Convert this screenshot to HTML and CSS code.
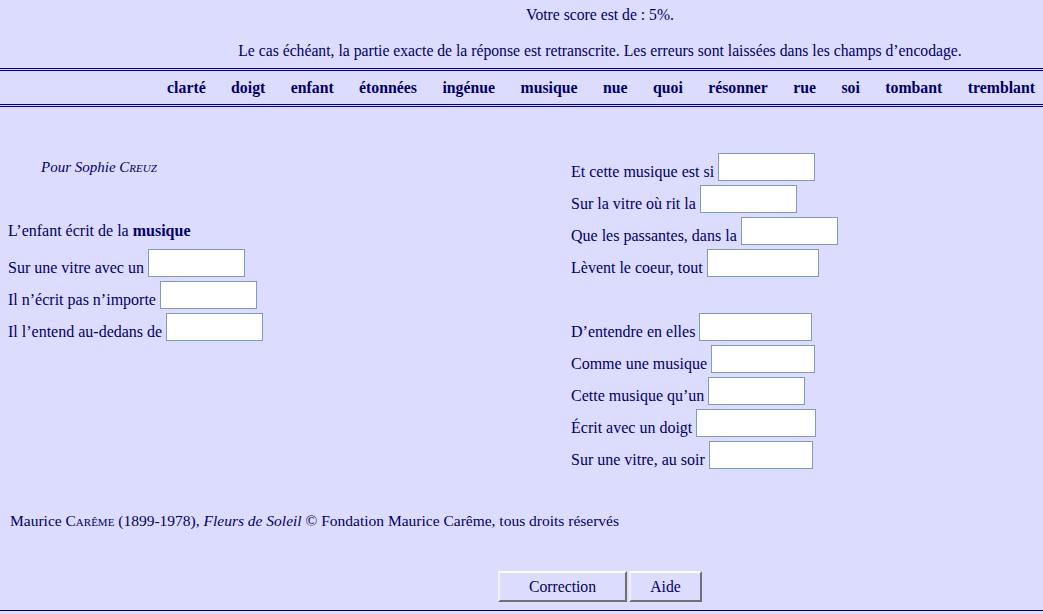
FILE: index.html
```html
<!DOCTYPE html>
<html lang="fr">
<head>
<meta charset="utf-8">
<title>Exercice</title>
<link rel="stylesheet" href="styles.css">
</head>
<body>
<div class="head">
  <p class="score">Votre score est de : 5%.</p>
  <p class="note">Le cas échéant, la partie exacte de la réponse est retranscrite. Les erreurs sont laissées dans les champs d’encodage.</p>
</div>
<div class="words">
  <span>clarté</span><span>doigt</span><span>enfant</span><span>étonnées</span><span>ingénue</span><span>musique</span><span>nue</span><span>quoi</span><span>résonner</span><span>rue</span><span>soi</span><span>tombant</span><span>tremblant</span>
</div>
<div class="poem">
  <div class="col left">
    <div class="row text dedic"><i>Pour Sophie <span class="sc">Creuz</span></i></div>
    <div class="row"></div>
    <div class="row text">L’enfant écrit de la&nbsp;<b>musique</b></div>
    <div class="row"><span>Sur une vitre avec un</span><input class="w97" type="text"></div>
    <div class="row"><span>Il n’écrit pas n’importe</span><input class="w97" type="text"></div>
    <div class="row"><span>Il l’entend au-dedans de</span><input class="w97" type="text"></div>
  </div>
  <div class="col right">
    <div class="row"><span>Et cette musique est si</span><input class="w97" type="text"></div>
    <div class="row"><span>Sur la vitre où rit la</span><input class="w97" type="text"></div>
    <div class="row"><span>Que les passantes, dans la</span><input class="w97" type="text"></div>
    <div class="row"><span>Lèvent le coeur, tout</span><input class="w112" type="text"></div>
    <div class="row"></div>
    <div class="row"><span>D’entendre en elles</span><input class="w113" type="text"></div>
    <div class="row"><span>Comme une musique</span><input class="w104" type="text"></div>
    <div class="row"><span>Cette musique qu’un</span><input class="w97" type="text"></div>
    <div class="row"><span>Écrit avec un doigt</span><input class="w120" type="text"></div>
    <div class="row"><span>Sur une vitre, au soir</span><input class="w104" type="text"></div>
  </div>
</div>
<p class="credit">Maurice <span class="sc">Carême</span> (1899-1978), <i>Fleurs de Soleil</i> © Fondation Maurice Carême, tous droits réservés</p>
<div class="buttons">
  <button class="btn wide" type="button">Correction</button><button class="btn" type="button">Aide</button>
</div>
<div class="foot"></div>
</body>
</html>
```
FILE: styles.css
```css
html, body {
  margin: 0;
  padding: 0;
  background: #dcdcff;
}
body {
  font-family: "Liberation Serif", serif;
  font-size: 16px;
  color: #000066;
  height: 614px;
  overflow: hidden;
}
.head {
  height: 68px;
  padding-left: 157px;
  text-align: center;
  font-size: 15.7px;
}
.head p {
  margin: 0;
  line-height: 18px;
}
.score {
  padding-top: 6px;
}
.note {
  padding-top: 18px;
}
.words {
  border-top: 3px double #000080;
  border-bottom: 3px double #000080;
  height: 33px;
  display: flex;
  justify-content: flex-end;
  align-items: center;
  gap: 25.4px;
  padding-right: 8px;
  font-weight: bold;
  font-size: 15.8px;
}
.poem {
  display: flex;
  padding-top: 46px;
}
.col {
  display: flex;
  flex-direction: column;
  gap: 4px;
}
.left {
  width: 563px;
  padding-left: 8px;
}
.row {
  height: 28px;
  display: flex;
  align-items: flex-end;
  gap: 4px;
  white-space: nowrap;
}
.row > span {
  line-height: 18px;
}
.row.text {
  align-items: center;
  gap: 0;
}
.dedic {
  padding-left: 33px;
  font-size: 15px;
}
.sc {
  font-variant: small-caps;
}
input {
  box-sizing: border-box;
  height: 28px;
  border: 1px solid #7f9db9;
  background: #fff;
  margin: 0;
  padding: 0 2px;
  font: inherit;
}
.w97 { width: 97px; }
.w104 { width: 104px; }
.w112 { width: 112px; }
.w113 { width: 113px; }
.w120 { width: 120px; }
.credit {
  margin: 0;
  padding: 43px 0 0 10px;
  line-height: 18px;
  font-size: 15.5px;
}
.buttons {
  display: flex;
  justify-content: center;
  gap: 2px;
  padding: 41px 0 0 157px;
}
.btn {
  font: inherit;
  font-size: 15.7px;
  color: #000066;
  background: #dcdcff;
  border-style: solid;
  border-width: 2px;
  border-color: #ffffff #707070 #707070 #f0f0ff;
  height: 31px;
  width: 73px;
  padding: 0;
}
.btn.wide {
  width: 129px;
}
.foot {
  margin-top: 8px;
  border-top: 1px solid #000066;
}
```
